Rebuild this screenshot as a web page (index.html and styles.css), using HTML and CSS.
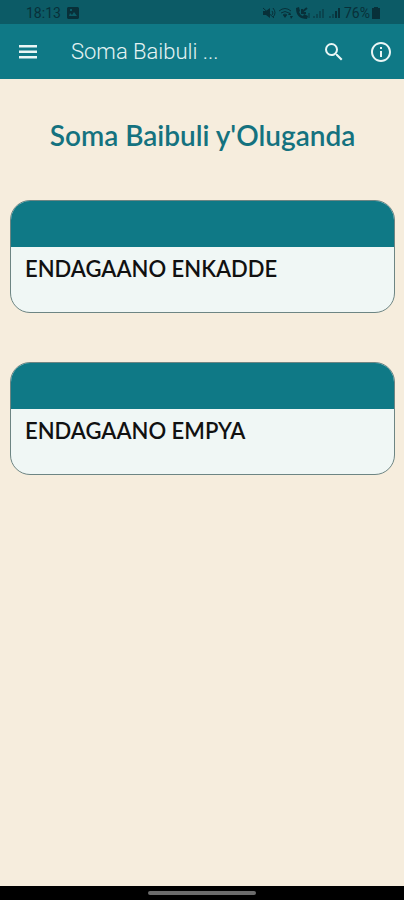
FILE: index.html
```html
<!doctype html>
<html lang="lg">

<head>
  <meta charset="utf-8">
  <meta name="viewport" content="width=device-width, initial-scale=1">
  <title>Soma Baibuli y'Oluganda</title>
  <link rel="stylesheet" href="styles.css">
</head>

<body>
  <div class="status">
    <span>18:13</span>
    <svg class="picture" width="12" height="12" viewBox="0 0 12 12"><path fill-rule="evenodd" d="M1 0h10l1 1v10l-1 1H1l-1-1V1zM2 9h8L7 5 5 8 3 6zM3 2v2h2V2z"/></svg>
    <div class="signals">
      <!-- muted -->
      <svg width="14" height="14" viewBox="0 0 14 14"><path d="M1 5h3l4-3v10L4 9H1z"/><path class="line" d="M1 2l11 10M10 5q2 2 0 4M11 2q4 5 0 9"/></svg>
      <!-- wifi -->
      <svg width="15" height="14" viewBox="0 0 15 14"><path class="line" d="M1 5q6-5 12 0M3 7q4-3 8 0M5 9q2-2 4 0"/><path d="M5 9h4l-2 3zM10 9l2-3 1 3zM12 10h3l-2 3z"/></svg>
      <!-- wifi call -->
      <svg width="15" height="14" viewBox="0 0 15 14"><path d="M1 2l3-1 1 4-1 1q1 3 4 4l1-2 4 2-1 3Q1 13 1 2z"/><path class="line bold" d="M12 2L7 6M7 3v4h4"/><path class="line" d="M14 7v5"/></svg>
      <svg width="14" height="14" viewBox="0 0 14 14"><path class="line" d="M2 10v2M5 8v4M8 5v7M11 3v9"/></svg>
      <svg width="14" height="14" viewBox="0 0 14 14"><path class="line" d="M2 10v2M5 8v4"/><path class="line bold" d="M8 5v7M11 2v10"/></svg>
      <span class="percent">76%</span>
      <svg width="8" height="12" viewBox="0 0 8 12"><path d="M2 0h4v1h2v11H0V1h2z"/></svg>
    </div>
  </div>

  <header class="bar">
    <button class="icon" type="button" aria-label="Menu">
      <svg width="20" height="16" viewBox="0 0 20 16"><path d="M1 1h18v2.500H1zM1 6.500h18V9H1zM1 12h18v2.500H1z"/></svg>
    </button>
    <span class="name">Soma Baibuli ...</span>
    <button class="icon" type="button" aria-label="Search">
      <svg width="24" height="24" viewBox="0 0 24 24"><path d="M15.5 14h-.79l-.28-.27A6.471 6.471 0 0 0 16 9.500 6.500 6.500 0 1 0 9.500 16c1.610 0 3.090-.59 4.230-1.570l.27.28v.79l5 4.990L20.490 19l-4.990-5zm-6 0C7.010 14 5 11.990 5 9.500S7.010 5 9.500 5 14 7.010 14 9.500 11.990 14 9.500 14z"/></svg>
    </button>
    <button class="icon" type="button" aria-label="Info">
      <svg width="24" height="24" viewBox="0 0 24 24"><path d="M11 7h2v2h-2zm0 4h2v6h-2zm1-9C6.480 2 2 6.480 2 12s4.480 10 10 10 10-4.480 10-10S17.520 2 12 2zm0 18c-4.410 0-8-3.590-8-8s3.590-8 8-8 8 3.590 8 8-3.590 8-8 8z"/></svg>
    </button>
  </header>

  <main>
    <h1>Soma Baibuli y'Oluganda</h1>
    <a class="card" href="#enkadde"><h2>ENDAGAANO ENKADDE</h2></a>
    <a class="card" href="#empya"><h2>ENDAGAANO EMPYA</h2></a>
  </main>

  <footer class="gesture"><div class="handle"></div></footer>
</body>

</html>
```
FILE: styles.css
```css
* { box-sizing:border-box; }
body { margin:0; min-height:100vh; display:flex; flex-direction:column; background-color:#f6eddd; font-family:Lato,sans-serif; }

.status { display:flex; align-items:center; height:24px; padding:2px 24px 0 26px; background-color:#0c5b66; color:#083039; font:14px Roboto,sans-serif; }
.status svg { fill:#083039; }
.status .line { fill:none; stroke:#083039; stroke-width:1; }
.status .bold { stroke-width:2; }
.picture { margin-left:6px; }
.signals { display:flex; align-items:center; gap:2px; margin-left:auto; }
.signals svg { flex:none; }

.bar { display:flex; align-items:center; height:55px; padding:0 3px 0 8px; background-color:#0f7986; color:#e4f3f3; }
.icon { display:flex; align-items:center; justify-content:center; width:40px; height:40px; padding:0; border:0; background:none; }
.icon svg { fill:#eaf6f5; }
.icon + .icon { margin-left:7px; }
.name { flex:1; padding-left:23px; font:300 22px Roboto,sans-serif; }

main { flex:1; padding:40px 9px 0 10px; }
h1 { margin:0 0 49px; color:#14727f; font-size:28px; font-weight:600; line-height:32px; text-align:center; }
.card { display:block; min-height:113px; margin-bottom:49px; overflow:hidden; border:1px solid #6d8583; border-radius:20px; background-color:#f0f7f5; color:#111; text-decoration:none; }
.card:before { content:""; display:block; height:46px; background-color:#0f7986; }
h2 { margin:0; padding:8px 14px; font-size:22px; font-weight:600; line-height:28px; }

.gesture { display:flex; justify-content:center; align-items:center; height:14px; background-color:#000; }
.handle { width:108px; height:4px; border-radius:2px; background-color:#6c6c6c; }
```
